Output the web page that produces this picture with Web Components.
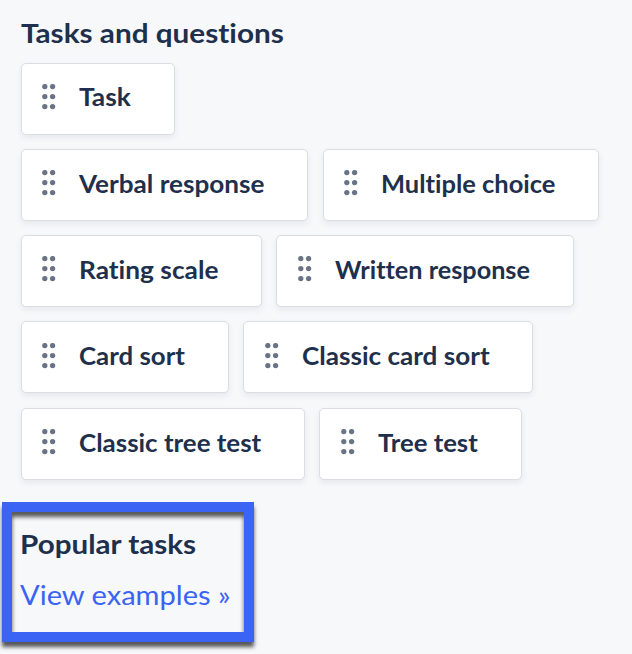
<!DOCTYPE html>
<html lang="en">
<head>
<meta charset="utf-8">
<title>Tasks and questions</title>
<style>
    body {
        margin: 0;
        background: #f7f8fa;
        color: #20304c;
        font-family: Lato, "Open Sans", sans-serif;
        font-variant-ligatures: none;
    }
    .first { --label-shift: -1px; }
    .lower { --grip-shift: 1px; }
    .last { --grip-shift: 1px; --label-shift: 1px; }
</style>
</head>
<body>
<task-panel>
    <fit-text slot="title" width="263">Tasks and questions</fit-text>
    <card-row class="first">
        <task-card width="154" label="51.5">Task</task-card>
    </card-row>
    <card-row>
        <task-card width="287.3" label="185">Verbal response</task-card>
        <task-card width="276" label="174">Multiple choice</task-card>
    </card-row>
    <card-row>
        <task-card width="241" label="139">Rating scale</task-card>
        <task-card width="298" label="194.5">Written response</task-card>
    </card-row>
    <card-row class="lower">
        <task-card width="208" label="105.5">Card sort</task-card>
        <task-card width="290" label="188">Classic card sort</task-card>
    </card-row>
    <card-row class="last">
        <task-card width="284" label="182.5">Classic tree test</task-card>
        <task-card width="203" label="99.5">Tree test</task-card>
    </card-row>
    <popular-tasks slot="footer">
        <fit-text slot="title" width="176.5">Popular tasks</fit-text>
        <fit-text slot="link" width="211">View examples »</fit-text>
    </popular-tasks>
</task-panel>

<script>
(function() {
    "use strict";

    // One line of text, stretched so that it fills the given width.
    class FitText extends HTMLElement {
        constructor() {
            super();
            this.attachShadow({mode: 'open'}).innerHTML = `
                <style>
                    :host { display: block; white-space: nowrap; }
                    span { display: inline-block; transform-origin: 0 0; }
                </style>
                <span><slot></slot></span>
            `;
        }

        connectedCallback() {
            const span = this.shadowRoot.querySelector('span');
            const width = parseFloat(this.getAttribute('width'));
            span.style.transform = 'scaleX(' + (width / span.offsetWidth) + ')';
        }
    }

    class TaskCard extends HTMLElement {
        constructor() {
            super();
            const label = this.getAttribute('label');
            this.attachShadow({mode: 'open'}).innerHTML = `
                <style>
                    :host {
                        display: flex;
                        box-sizing: border-box;
                        width: ${this.getAttribute('width')}px;
                        height: 72px;
                        padding: 19.5px 0 0 20.2px;
                        border: 1px solid #dadde1;
                        border-radius: 5px;
                        background: #fff;
                        box-shadow: 0 3px 6px rgba(32, 48, 76, .08);
                    }
                    svg {
                        flex: none;
                        width: 14px;
                        height: 26px;
                        margin-top: var(--grip-shift, 0);
                        fill: #687386;
                    }
                    fit-text {
                        margin: var(--label-shift, 0) 0 0 23.2px;
                        font-size: 24px;
                        font-weight: 700;
                        line-height: 28px;
                    }
                </style>
                <svg viewBox="0 0 14 26">
                    <circle cx="2.8" cy="2.6" r="2.65"/><circle cx="10.6" cy="2.6" r="2.65"/>
                    <circle cx="2.8" cy="12.6" r="2.65"/><circle cx="10.6" cy="12.6" r="2.65"/>
                    <circle cx="2.8" cy="22.6" r="2.65"/><circle cx="10.6" cy="22.6" r="2.65"/>
                </svg>
                <fit-text width="${label}">${this.textContent}</fit-text>
            `;
        }
    }

    class CardRow extends HTMLElement {
        constructor() {
            super();
            this.attachShadow({mode: 'open'}).innerHTML = `
                <style>
                    :host { display: flex; gap: 14.4px; }
                </style>
                <slot></slot>
            `;
        }
    }

    class PopularTasks extends HTMLElement {
        constructor() {
            super();
            this.attachShadow({mode: 'open'}).innerHTML = `
                <style>
                    :host {
                        display: block;
                        box-sizing: border-box;
                        width: 252px;
                        height: 140px;
                        padding: 15px 0 0 8px;
                        border: 10px solid #3b63f4;
                        box-shadow: 0 5px 4px rgba(0, 0, 0, .65), inset 0 5px 4px rgba(0, 0, 0, .65);
                        font-size: 27px;
                        line-height: 34px;
                    }
                    h2 { margin: 0; font-size: inherit; font-weight: 700; }
                    a { display: block; margin-top: 17px; color: #3b63f4; }
                </style>
                <h2><slot name="title"></slot></h2>
                <a><slot name="link"></slot></a>
            `;
        }
    }

    class TaskPanel extends HTMLElement {
        constructor() {
            super();
            this.attachShadow({mode: 'open'}).innerHTML = `
                <style>
                    :host { display: block; box-sizing: border-box; height: 654px; padding-top: 16px; }
                    h2 {
                        margin: 0 0 13.05px 20.6px;
                        font-size: 27px;
                        font-weight: 700;
                        line-height: 34px;
                    }
                    .rows { display: flex; flex-direction: column; gap: 14.14px; margin-left: 21px; }
                    .footer { margin: 22.4px 0 0 2px; }
                </style>
                <h2><slot name="title"></slot></h2>
                <div class="rows"><slot></slot></div>
                <div class="footer"><slot name="footer"></slot></div>
            `;
        }
    }

    // fit-text measures itself, so the elements that set its font come first.
    window.customElements.define('task-panel', TaskPanel);
    window.customElements.define('popular-tasks', PopularTasks);
    window.customElements.define('card-row', CardRow);
    window.customElements.define('task-card', TaskCard);
    window.customElements.define('fit-text', FitText);
})();
</script>
</body>
</html>
